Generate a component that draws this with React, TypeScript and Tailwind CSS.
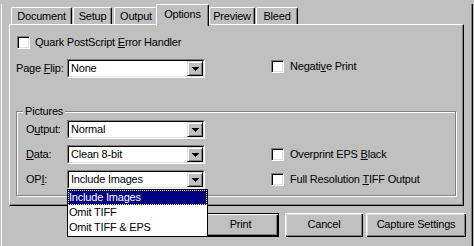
const U = ({ children }: { children: string }) => (
  <span className="underline decoration-1 underline-offset-[1px]">{children}</span>
);

const Check = () => (
  <div className="w-[13px] h-[13px] shrink-0 bg-white border border-t-[#808080] border-l-[#808080] border-b-white border-r-white shadow-[inset_1px_1px_0_#000,inset_-1px_-1px_0_#dfdfdf]" />
);

const Arrow = () => (
  <svg width="7" height="4" viewBox="0 0 7 4" shapeRendering="crispEdges">
    <path d="M0 0h7v1H0zM1 1h5v1H1zM2 2h3v1H2zM3 3h1v1H3z" fill="#000" />
  </svg>
);

const Combo = ({ value }: { value: string }) => (
  <div className="w-[138px] h-[19px] shrink-0 flex border border-t-[#808080] border-l-[#808080] border-b-white border-r-white">
    <div className="flex-1 flex bg-white border border-t-black border-l-black border-b-[#dfdfdf] border-r-[#dfdfdf]">
      <span className="flex-1 pl-[2px] leading-[15px] whitespace-nowrap">{value}</span>
      <div className="w-[16px] h-full flex items-center justify-center bg-[#c0c0c0] border border-t-[#dfdfdf] border-l-[#dfdfdf] border-b-black border-r-black shadow-[inset_1px_1px_0_#fff,inset_-1px_-1px_0_#808080]">
        <Arrow />
      </div>
    </div>
  </div>
);

const Tab = ({ label, className }: { label: string; className: string }) => (
  <div
    className={`shrink-0 h-[17px] pt-[2px] text-center bg-[#c0c0c0] rounded-t-[2px] border-t border-l border-white border-r border-r-black shadow-[inset_-1px_0_0_#808080] ${className}`}
  >
    {label}
  </div>
);

export default function App() {
  return (
    <div className="w-[474px] h-[246px] bg-[#c0c0c0] pl-[1px] font-['Liberation_Sans',Arial,sans-serif] text-[11px] leading-[13px] tracking-[-0.2px] text-black relative overflow-hidden">
      <div className="w-[472px] h-[244px] border-l border-l-white border-r border-r-black border-b border-b-black shadow-[inset_-1px_-1px_0_#808080]">
        {/* tab strip */}
        <div className="mt-[4px] h-[20px] pl-[9px] flex items-end">
          <Tab label="Document" className="w-[61px]" />
          <Tab label="Setup" className="ml-[1px] w-[39px]" />
          <Tab label="Output" className="ml-[2px] w-[44px]" />
          <div className="relative z-10 shrink-0 -ml-[2px] -mb-[2px] w-[53px] h-[22px] pt-[3px] text-center bg-[#c0c0c0] rounded-t-[2px] border-t border-l border-white border-r border-r-black shadow-[inset_-1px_0_0_#808080]">
            Options
          </div>
          <Tab label="Preview" className="w-[46px]" />
          <Tab label="Bleed" className="ml-[1px] w-[42px]" />
        </div>

        {/* pane */}
        <div className="ml-[7px] w-[455px] h-[182px] border-t border-l border-white border-r border-b border-r-black border-b-black shadow-[inset_-1px_-1px_0_#808080]">
          <div className="mt-[11px] ml-[7px] flex items-center gap-[5px] h-[13px]">
            <Check />
            <span>
              Quark PostScript <U>E</U>rror Handler
            </span>
          </div>

          <div className="mt-[10px] ml-[6px] flex items-center h-[19px]">
            <span className="w-[51px] shrink-0">
              Page <U>F</U>lip:
            </span>
            <Combo value="None" />
            <div className="ml-[66px] self-start mt-[1px] flex items-center gap-[6px]">
              <Check />
              <span>
                Negati<U>v</U>e Print
              </span>
            </div>
          </div>

          <div className="relative mt-[33px] ml-[6px] w-[440px] h-[85px] border border-[#808080] shadow-[1px_1px_0_#fff,inset_1px_1px_0_#fff]">
            <span className="absolute left-[6px] -top-[7px] px-[2px] bg-[#c0c0c0]">Pictures</span>

            <div className="mt-[8px] ml-[9px] flex items-center h-[19px]">
              <span className="w-[41px] shrink-0">
                O<U>u</U>tput:
              </span>
              <Combo value="Normal" />
            </div>
            <div className="mt-[6px] ml-[9px] flex items-center h-[19px]">
              <span className="w-[41px] shrink-0">
                <U>D</U>ata:
              </span>
              <Combo value="Clean 8-bit" />
              <div className="ml-[66px] flex items-center gap-[6px]">
                <Check />
                <span>
                  Overprint EPS <U>B</U>lack
                </span>
              </div>
            </div>
            <div className="mt-[6px] ml-[9px] flex items-center h-[19px]">
              <span className="w-[41px] shrink-0">
                OP<U>I</U>:
              </span>
              <Combo value="Include Images" />
              <div className="ml-[66px] flex items-center gap-[6px]">
                <Check />
                <span>
                  Full Resolution <U>T</U>IFF Output
                </span>
              </div>
            </div>
          </div>
        </div>

        {/* buttons */}
        <div className="mt-[7px] pr-[6px] flex justify-end">
          <div className="w-[77px] h-[24px] pb-[2px] flex items-center justify-center border border-black shadow-[inset_1px_1px_0_#fff,inset_-1px_-1px_0_#000,inset_-2px_-2px_0_#808080]">
            Print
          </div>
          <div className="ml-[6px] w-[78px] h-[24px] pb-[2px] flex items-center justify-center shadow-[inset_1px_1px_0_#fff,inset_-1px_-1px_0_#000,inset_-2px_-2px_0_#808080,inset_2px_2px_0_#dfdfdf]">
            Cancel
          </div>
          <div className="ml-[3px] w-[100px] h-[24px] pb-[2px] flex items-center justify-center shadow-[inset_1px_1px_0_#fff,inset_-1px_-1px_0_#000,inset_-2px_-2px_0_#808080,inset_2px_2px_0_#dfdfdf]">
            Capture Settings
          </div>
        </div>
      </div>

      {/* open OPI list */}
      <div className="absolute z-20 left-[67px] top-[189px] w-[141px] pb-[1px] bg-white border border-black">
        <div className="h-[15px] leading-[13px] bg-[#000080] text-white border border-dotted border-[#ffff80]">
          Include Images
        </div>
        <div className="h-[15px] leading-[13px] pt-[1px] pl-[1px]">Omit TIFF</div>
        <div className="h-[15px] leading-[13px] pt-[1px] pl-[1px]">Omit TIFF &amp; EPS</div>
      </div>
    </div>
  );
}
